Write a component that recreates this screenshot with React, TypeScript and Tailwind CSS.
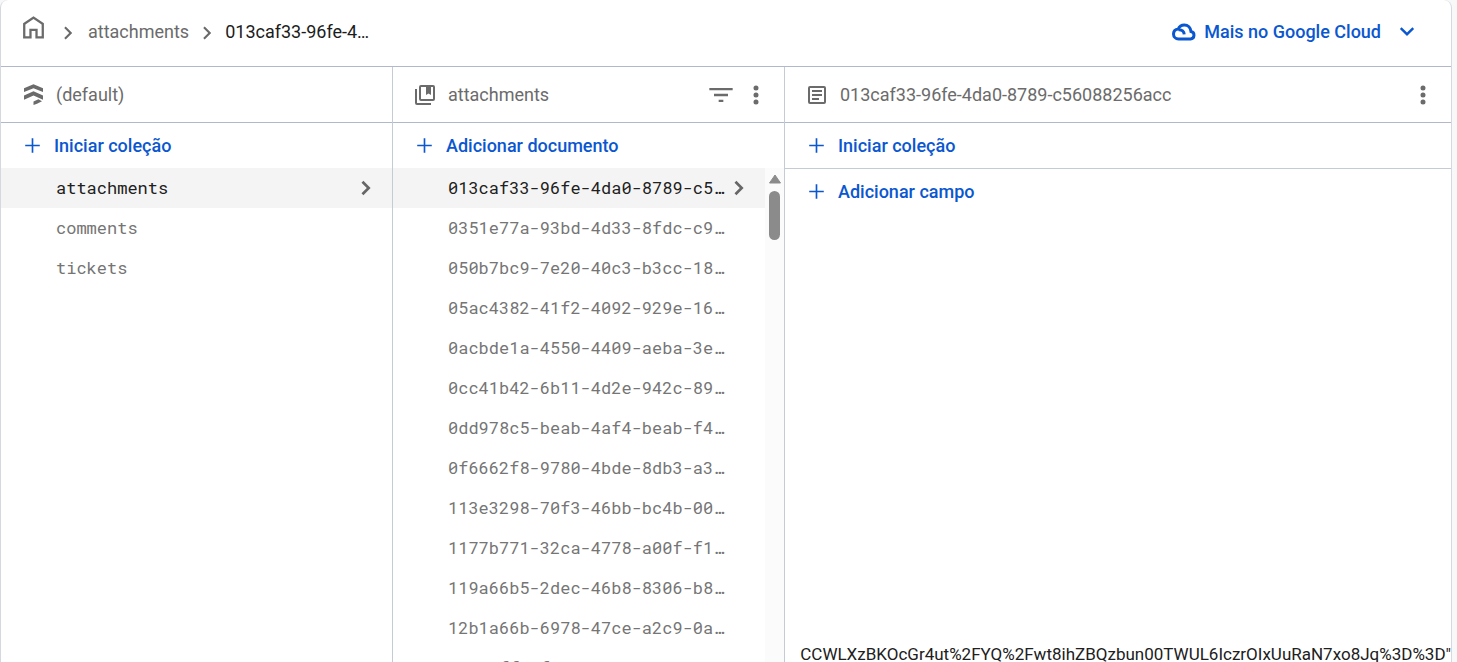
import React from "react";

const collections = ["attachments", "comments", "tickets"];

const documents = [
  "013caf33-96fe-4da0-8789-c5…",
  "0351e77a-93bd-4d33-8fdc-c9…",
  "050b7bc9-7e20-40c3-b3cc-18…",
  "05ac4382-41f2-4092-929e-16…",
  "0acbde1a-4550-4409-aeba-3e…",
  "0cc41b42-6b11-4d2e-942c-89…",
  "0dd978c5-beab-4af4-beab-f4…",
  "0f6662f8-9780-4bde-8db3-a3…",
  "113e3298-70f3-46bb-bc4b-00…",
  "1177b771-32ca-4778-a00f-f1…",
  "119a66b5-2dec-46b8-8306-b8…",
  "12b1a66b-6978-47ce-a2c9-0a…",
  "1c3aeff1-fe26-4dbc-8ea3-9a…",
];

type IconProps = { d: string; className?: string };

function Icon({ d, className = "size-6" }: IconProps) {
  return (
    <svg viewBox="0 0 24 24" fill="currentColor" aria-hidden="true" className={`shrink-0 ${className}`}>
      <path d={d} />
    </svg>
  );
}

const paths = {
  chevron: "M8.2 17 13.200 12 8.200 7 9.700 5.500l6.500 6.500-6.500 6.500z",
  heavyChevron: "M7.5 17.300 12.800 12 7.500 6.700 9.400 4.800 16.600 12l-7.200 7.200z",
  plus: "M19 12.8h-6.2V19h-1.6v-6.2H5v-1.6h6.2V5h1.6v6.2H19z",
  more: "M12 7.500a2.500 2.500 0 1 0 0-5 2.500 2.500 0 0 0 0 5zm0 2a2.500 2.500 0 1 0 0 5 2.500 2.500 0 0 0 0-5zm0 7a2.500 2.500 0 1 0 0 5 2.500 2.500 0 0 0 0-5z",
  home: "M12 1.200 2 8v14.500h8.200v-7.200h3.600v7.200H22V8zM12 3.900l7.800 5.300v11.100H16v-7.200H8v7.200H4.200V9.200z",
  firestore: "M12.500 1.200 3 5.200v3.900l9.500-3.800L22 9.100V5.200zM12.500 8.300 3 12.500v4.200l9.500-4.200 9.500 4.200v-4.200zM17.400 16.300l-4.900 2.300V22l3.500-1.200 5-2.600z",
  collection: "M4 6H2v14a2 2 0 0 0 2 2h14v-2H4zM20 2H8a2 2 0 0 0-2 2v12a2 2 0 0 0 2 2h12a2 2 0 0 0 2-2V4a2 2 0 0 0-2-2zm0 14H8V4h5v8l2.500-1.500L18 12V4h2z",
  filter: "M10 18h4v-2h-4zM2 6v2h20V6zm4 7h12v-2H6z",
  doc: "M19 5v14H5V5zm0-2H5a2 2 0 0 0-2 2v14a2 2 0 0 0 2 2h14a2 2 0 0 0 2-2V5a2 2 0 0 0-2-2zM14 17H7v-2h7zm3-4H7v-2h10zm0-4H7V7h10z",
};

function AddButton({ label }: { label: string }) {
  return (
    <button type="button" className="flex h-[45px] w-full shrink-0 items-center gap-[9px] pl-[19px] text-left text-lg font-medium text-[#0b57d0]">
      <Icon d={paths.plus} className="size-[25px]" />
      {label}
    </button>
  );
}

function Row({ label, selected }: { label: string; selected: boolean }) {
  return (
    <li>
      <a
        href="#"
        aria-current={selected}
        className={`flex h-10 items-center justify-between pr-3.5 pl-[55px] font-['Roboto_Mono','Liberation_Mono',monospace] text-[17px] whitespace-nowrap ${selected ? "bg-[#f4f4f4] text-[#202020]" : "text-[#757575]"}`}
      >
        {label}
        {selected && <Icon d={paths.heavyChevron} className="size-6 text-[#666]" />}
      </a>
    </li>
  );
}

const panelHeader = "flex h-14 shrink-0 items-center border-b border-[#b1b8c9] text-lg text-[#6b6b6b]";

export default function App() {
  return (
    <div className="flex h-screen bg-[#f8f8f8] font-['Roboto',sans-serif]">
      <main className="mr-[5px] flex min-w-0 flex-1 flex-col overflow-hidden rounded-t-lg border-x border-[#d5d8e0] bg-white">
        <header className="flex h-[67px] shrink-0 items-center justify-between border-b border-[#b1b8c9] pr-8 pb-[3px] pl-5">
          <nav aria-label="Breadcrumb" className="flex items-center text-lg text-[#6b6b6b]">
            <a href="#" aria-label="Home" className="mb-2">
              <Icon d={paths.home} className="size-[25px]" />
            </a>
            <Icon d={paths.chevron} className="mr-2 ml-2.5 mt-0.5 size-6" />
            <a href="#">attachments</a>
            <Icon d={paths.chevron} className="mx-1.5 mt-0.5 size-6" />
            <span className="text-[#1c1c1c]">013caf33-96fe-4…</span>
          </nav>
          <button type="button" className="flex items-center gap-2 text-lg font-medium text-[#0b57d0]">
            <svg viewBox="0 0 24 24" className="size-6" fill="none" stroke="currentColor" strokeWidth="3" aria-hidden="true">
              <path d="M6.500 19H18.500a3.800 3.800 0 0 0 .5-7.500C18.600 7.800 16 5 12.300 5 9.500 5 7.300 6.500 6.300 8.900 3.300 9.200 1.500 11.300 1.500 14c0 2.800 2.200 5 5 5z" />
              <path d="M6.500 9.800c3.600-.2 5.600 1.700 5.700 4.600" />
            </svg>
            Mais no Google Cloud
            <Icon d="m6.600 7.200 5.400 5.400 5.400-5.400 1.700 1.700-7.100 7.100-7.100-7.100z" className="ml-1.5 size-6" />
          </button>
        </header>

        <div className="grid min-h-0 flex-1 grid-cols-[391px_392px_minmax(0,1fr)]">
          <section className="flex min-h-0 flex-col">
            <div className={`${panelHeader} gap-[11px] pl-5`}>
              <Icon d={paths.firestore} />
              (default)
            </div>
            <AddButton label="Iniciar coleção" />
            <ul>
              {collections.map((name, i) => (
                <Row key={name} label={name} selected={i === 0} />
              ))}
            </ul>
          </section>

          <section className="flex min-h-0 flex-col border-l border-[#c5cad7]">
            <div className={`${panelHeader} gap-[11px] pr-4 pl-5`}>
              <Icon d={paths.collection} />
              <span className="flex-1">attachments</span>
              <div className="flex items-center gap-[9px]">
                <button type="button" aria-label="Filtrar">
                  <Icon d={paths.filter} className="size-7" />
                </button>
                <button type="button" aria-label="Mais opções">
                  <Icon d={paths.more} />
                </button>
              </div>
            </div>
            <AddButton label="Adicionar documento" />
            <div className="flex min-h-0 flex-1">
              <ul className="min-w-0 flex-1 overflow-hidden">
                {documents.map((id, i) => (
                  <Row key={id} label={id} selected={i === 0} />
                ))}
              </ul>
              <div aria-hidden="true" className="flex w-[19px] flex-col items-center gap-[7px] bg-[#fbfbfb] pt-1.5">
                <svg viewBox="0 0 12 10" className="h-2.5 w-3" fill="#8b8b8b" stroke="#8b8b8b" strokeLinejoin="round">
                  <path d="M6 1 11.500 9H.5z" />
                </svg>
                <div className="h-[49px] w-[11px] rounded-full bg-[#8b8b8b]" />
              </div>
            </div>
          </section>

          <section className="flex min-h-0 flex-col overflow-hidden border-l border-[#c5cad7]">
            <div className={`${panelHeader} gap-[11px] pr-4 pl-5`}>
              <Icon d={paths.doc} />
              <span className="flex-1">013caf33-96fe-4da0-8789-c56088256acc</span>
              <button type="button" aria-label="Mais opções">
                <Icon d={paths.more} />
              </button>
            </div>
            <div className="border-b border-[#c5cad7]">
              <AddButton label="Iniciar coleção" />
            </div>
            <AddButton label="Adicionar campo" />
            <p className="mt-auto -mb-1 flex justify-end text-[17px] leading-6 whitespace-nowrap text-[#202020]">
              CCWLXzBKOcGr4ut%2FYQ%2Fwt8ihZBQzbun00TWUL6IczrOIxUuRaN7xo8Jq%3D%3D"
            </p>
          </section>
        </div>
      </main>
    </div>
  );
}
